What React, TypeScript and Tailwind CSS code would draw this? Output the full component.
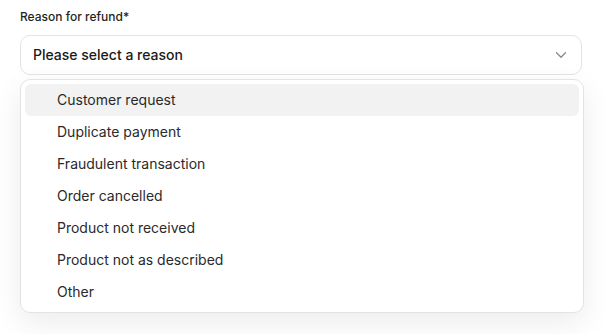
import React from "react";
import { ChevronDown } from "lucide-react";

const items = [
  "Customer request",
  "Duplicate payment",
  "Fraudulent transaction",
  "Order cancelled",
  "Product not received",
  "Product not as described",
  "Other",
];

export default function App() {
  return (
    <div
      className="w-[608px] h-[334px] bg-white px-5 pt-[9px]"
      style={{ fontFamily: "Inter, 'Noto Sans', sans-serif" }}
    >
      <div className="text-xs leading-4 font-medium text-[#1f1f1f]">Reason for refund*</div>
      <div className="mt-[10px] h-10 w-[562px] rounded-[10px] border border-[#e3e3e3] bg-white flex items-center justify-between pl-3 pr-[11px]">
        <span className="text-sm font-medium text-[#1a1a1a]">Please select a reason</span>
        <ChevronDown className="w-[18px] h-[18px] text-[#8a8a8a]" strokeWidth={1.75} />
      </div>
      <div className="mt-1 w-[564px] rounded-[10px] border border-[#e3e3e3] bg-white p-1 shadow-[0_10px_30px_rgba(0,0,0,0.08)]">
        {items.map((it, i) => (
          <div
            key={it}
            className={`h-8 flex items-center pl-8 rounded-md text-sm text-[#2a2a2a] ${i === 0 ? "bg-[#f2f2f2]" : ""}`}
          >
            {it}
          </div>
        ))}
      </div>
    </div>
  );
}
